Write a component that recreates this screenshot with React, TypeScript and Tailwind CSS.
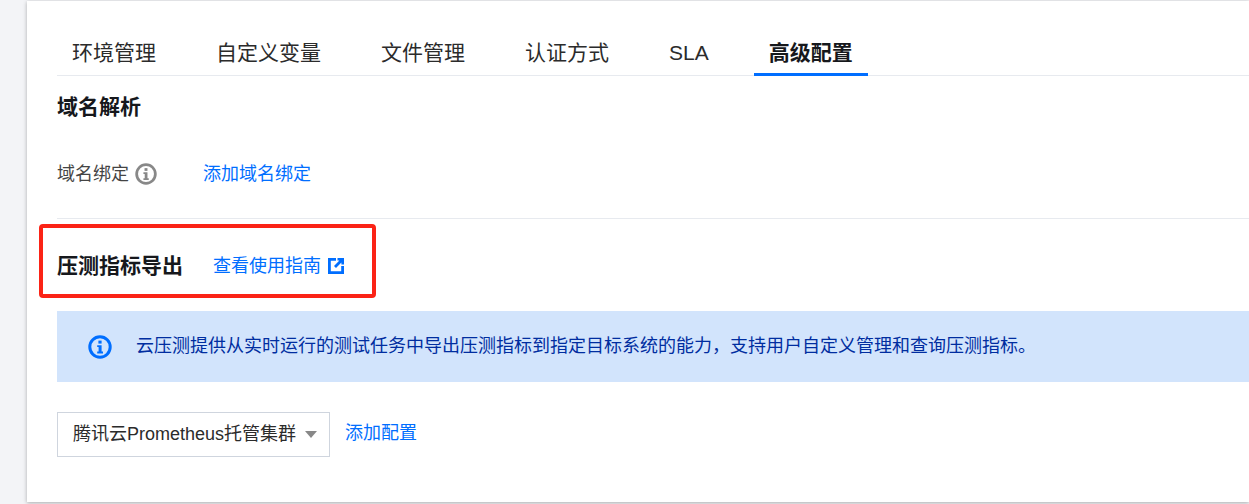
import React from "react";

const tabs = ["环境管理", "自定义变量", "文件管理", "认证方式", "SLA", "高级配置"];

const InfoIcon = ({ className }: { className: string }) => (
  <svg viewBox="0 0 24 24" fill="none" className={className}>
    <circle cx="12" cy="12" r="10.2" stroke="currentColor" strokeWidth="3" />
    <rect x="10.4" y="5.6" width="3.2" height="3" fill="currentColor" />
    <path d="M9.2 10.2h4.4v6.4h1.4v1.9H9.2v-1.9h1.4v-4.5H9.2z" fill="currentColor" />
  </svg>
);

const App = () => {
  return (
    <div className="w-[1249px] h-[504px] overflow-hidden bg-[#f3f4f7] pl-[27px] pt-px font-['Liberation_Sans','Noto_Sans_CJK_SC',sans-serif]">
      <div className="h-[501px] bg-white pl-[30px] pt-[30px] shadow-[0_1px_4px_rgba(0,0,0,0.3)]">
        <div className="flex h-[45px] gap-[30px] border-b border-[#e7eaef]">
          {tabs.map((tab, index) => (
            <div
              key={tab}
              className={
                index === 5
                  ? "h-[45px] px-[15px] pt-[7px] text-[21px] leading-[30px] font-bold text-[#16181c] border-b-[3px] border-[#006eff]"
                  : "h-[45px] px-[15px] pt-[7px] text-[21px] leading-[30px] text-[#2b2b2b]"
              }
            >
              {tab}
            </div>
          ))}
        </div>

        <h2 className="mt-[16px] text-[21px] leading-[30px] font-bold text-[#16181c]">域名解析</h2>

        <div className="mt-[39px] flex h-[27px] items-center text-[18px] leading-[27px]">
          <span className="text-[#444]">域名绑定</span>
          <InfoIcon className="ml-[6px] w-[22px] h-[22px] -translate-y-px text-[#888]" />
          <span className="ml-[46px] text-[#006eff]">添加域名绑定</span>
        </div>

        <div className="mt-[30px] border-t border-[#e7eaef]" />

        <div className="relative mt-[32px] flex h-[30px] items-center">
          <h2 className="text-[21px] leading-[30px] font-bold text-[#16181c]">压测指标导出</h2>
          <span className="ml-[30px] text-[18px] leading-[27px] text-[#006eff]">查看使用指南</span>
          <svg viewBox="0 0 16 16" className="ml-[7px] w-[16px] h-[16px] text-[#006eff]">
            <path d="M0 0h8v2.8H2.8v10.4h10.4V8H16v8H0z" fill="currentColor" />
            <path d="M9.5 0H16v6.5h-2.6V4.6L8 10 6 8l5.4-5.4H9.5z" fill="currentColor" />
          </svg>
          <div className="absolute left-[-18px] top-[-27px] h-[74px] w-[337px] rounded-[4px] border-[4px] border-[#fb2316]" />
        </div>

        <div className="mt-[30px] flex h-[71px] items-center bg-[#d2e4fc] pl-[31px]">
          <InfoIcon className="w-[24px] h-[24px] text-[#006eff]" />
          <span className="ml-[24px] text-[18px] leading-[27px] text-[#002da0]">
            云压测提供从实时运行的测试任务中导出压测指标到指定目标系统的能力，支持用户自定义管理和查询压测指标。
          </span>
        </div>

        <div className="mt-[30px] flex items-center">
          <div className="flex h-[45px] w-[273px] items-center border border-[#cfd5de] pl-[15px] text-[18px] text-[#2b2b2b]">
            <span>腾讯云Prometheus托管集群</span>
            <span className="ml-[9px] h-0 w-0 border-x-[6px] border-t-[7px] border-x-transparent border-t-[#888]" />
          </div>
          <span className="ml-[15px] text-[18px] leading-[27px] -translate-y-px text-[#006eff]">添加配置</span>
        </div>
      </div>
    </div>
  );
};

export default App;
